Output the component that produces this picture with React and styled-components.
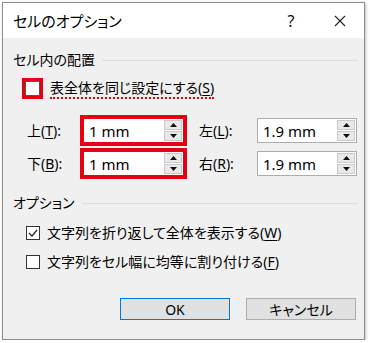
import React from 'react';
import styled, { createGlobalStyle } from 'styled-components';

const GlobalStyle = createGlobalStyle`
  html, body {
    margin: 0;
    padding: 0;
    background: #ffffff;
  }
  body {
    font-family: "Noto Sans", "Noto Sans CJK JP", sans-serif;
    font-feature-settings: "palt";
    color: #000;
  }
`;

const red = '#e60012';

const Dialog = styled.div`
  box-sizing: border-box;
  margin: 2px 0 0 2px;
  width: 363px;
  height: 338px;
  border: 1px solid #8c8c8c;
  background: #f0f0f0;
  box-shadow: 1px 1px 3px rgba(0, 0, 0, 0.25);
  display: flex;
  flex-direction: column;
`;

const TitleBar = styled.div`
  height: 35px;
  background: #ffffff;
  display: flex;
  align-items: center;
  padding-left: 10px;
`;

const Title = styled.div`
  flex: 1;
  font-size: 15px;
`;

const TitleButton = styled.div`
  width: ${p => p.w}px;
  display: flex;
  justify-content: center;
  align-items: center;
  font-size: 16px;
  color: #111;
`;

const Body = styled.div`
  flex: 1;
  display: flex;
  flex-direction: column;
  padding: 0 6px 0 10px;
  font-size: 14px;
`;

const Legend = styled.div`
  display: flex;
  align-items: center;
  gap: 7px;
  height: 16px;
  margin-top: ${p => p.top}px;
  line-height: 16px;
  &::after {
    content: '';
    flex: 1;
    height: 1px;
    background: #dcdcdc;
  }
`;

const CheckRow = styled.label`
  display: flex;
  align-items: center;
  height: ${p => p.h || 16}px;
  margin-top: ${p => p.top}px;
  padding-left: ${p => p.left}px;
  gap: 7px;
  line-height: 16px;
`;

const Box = styled.span`
  box-sizing: border-box;
  width: ${p => (p.highlight ? 21 : 14)}px;
  height: ${p => (p.highlight ? 21 : 14)}px;
  border: ${p => (p.highlight ? `3px solid ${red}` : '1px solid #333')};
  background: #fff;
  display: flex;
  align-items: center;
  justify-content: center;
  flex-shrink: 0;
  ${p => p.highlight && `box-shadow: inset 0 0 0 1px #555;`}
`;

const DottedText = styled.span`
  border-bottom: 2px dotted ${red};
  padding-bottom: 1px;
  margin-top: 3px;
`;

const Key = styled.span`
  text-decoration: underline;
  text-underline-offset: 2px;
`;

const MarginGrid = styled.div`
  display: grid;
  grid-template-columns: 56px 101px 15px 58px 100px;
  grid-auto-rows: 25px;
  row-gap: 8px;
  margin-top: 19px;
  padding-left: 14px;
  align-items: center;
`;

const FieldLabel = styled.span`
  grid-column: ${p => p.col};
  line-height: 16px;
`;

const Input = styled.div`
  grid-column: ${p => p.col};
  box-sizing: border-box;
  height: 25px;
  background: #fff;
  border: 1px solid ${p => (p.highlight ? red : '#adadad')};
  outline: ${p => (p.highlight ? `3px solid ${red}` : 'none')};
  display: flex;
  align-items: center;
  padding: 0 1px 0 5px;
  font-size: 15px;
`;

const Value = styled.span`
  flex: 1;
`;

const Spinner = styled.div`
  width: 18px;
  height: 21px;
  display: flex;
  flex-direction: column;
  gap: 1px;
`;

const SpinButton = styled.div`
  flex: 1;
  background: #e9e9e9;
  border: 1px solid #c9c9c9;
  display: flex;
  align-items: center;
  justify-content: center;
`;

const Arrow = ({ down }) => (
  <svg width="7" height="4" viewBox="0 0 7 4">
    <polygon points={down ? '0,0 7,0 3.5,4' : '0,4 7,4 3.5,0'} fill="#111" />
  </svg>
);

const Footer = styled.div`
  display: flex;
  justify-content: flex-end;
  gap: 16px;
  margin-top: 28px;
  padding-right: 2px;
`;

const Button = styled.button`
  box-sizing: border-box;
  width: 110px;
  height: 22px;
  background: #e1e1e1;
  border: 1px solid ${p => (p.primary ? '#0078d7' : '#adadad')};
  font: inherit;
  font-size: 14px;
  padding: 0;
  color: #000;
`;

const Check = () => (
  <svg width="12" height="12" viewBox="0 0 12 12">
    <polyline points="2,6 5,9 10,3" fill="none" stroke="#222" strokeWidth="1.2" />
  </svg>
);

const App = () => {
  return (
    <>
      <GlobalStyle />
      <Dialog>
        <TitleBar>
          <Title>セルのオプション</Title>
          <TitleButton w={50}>?</TitleButton>
          <TitleButton w={48}>
            <svg width="12" height="12" viewBox="0 0 12 12">
              <path d="M1 1 L11 11 M11 1 L1 11" stroke="#222" strokeWidth="1.1" />
            </svg>
          </TitleButton>
        </TitleBar>
        <Body>
          <Legend top={14}>セル内の配置</Legend>
          <CheckRow top={9} left={9} h={22}>
            <Box highlight />
            <DottedText>表全体を同じ設定にする(<Key>S</Key>)</DottedText>
          </CheckRow>
          <MarginGrid>
            <FieldLabel col={1}>上(<Key>T</Key>):</FieldLabel>
            <Input col={2} highlight>
              <Value>1 mm</Value>
              <Spinner>
                <SpinButton><Arrow /></SpinButton>
                <SpinButton><Arrow down /></SpinButton>
              </Spinner>
            </Input>
            <FieldLabel col={4}>左(<Key>L</Key>):</FieldLabel>
            <Input col={5}>
              <Value>1.9 mm</Value>
              <Spinner>
                <SpinButton><Arrow /></SpinButton>
                <SpinButton><Arrow down /></SpinButton>
              </Spinner>
            </Input>
            <FieldLabel col={1}>下(<Key>B</Key>):</FieldLabel>
            <Input col={2} highlight>
              <Value>1 mm</Value>
              <Spinner>
                <SpinButton><Arrow /></SpinButton>
                <SpinButton><Arrow down /></SpinButton>
              </Spinner>
            </Input>
            <FieldLabel col={4}>右(<Key>R</Key>):</FieldLabel>
            <Input col={5}>
              <Value>1.9 mm</Value>
              <Spinner>
                <SpinButton><Arrow /></SpinButton>
                <SpinButton><Arrow down /></SpinButton>
              </Spinner>
            </Input>
          </MarginGrid>
          <Legend top={19}>オプション</Legend>
          <CheckRow top={14} left={13}>
            <Box><Check /></Box>
            <span>文字列を折り返して全体を表示する(<Key>W</Key>)</span>
          </CheckRow>
          <CheckRow top={13} left={13}>
            <Box />
            <span>文字列をセル幅に均等に割り付ける(<Key>F</Key>)</span>
          </CheckRow>
          <Footer>
            <Button primary>OK</Button>
            <Button>キャンセル</Button>
          </Footer>
        </Body>
      </Dialog>
    </>
  );
};

export default App;
